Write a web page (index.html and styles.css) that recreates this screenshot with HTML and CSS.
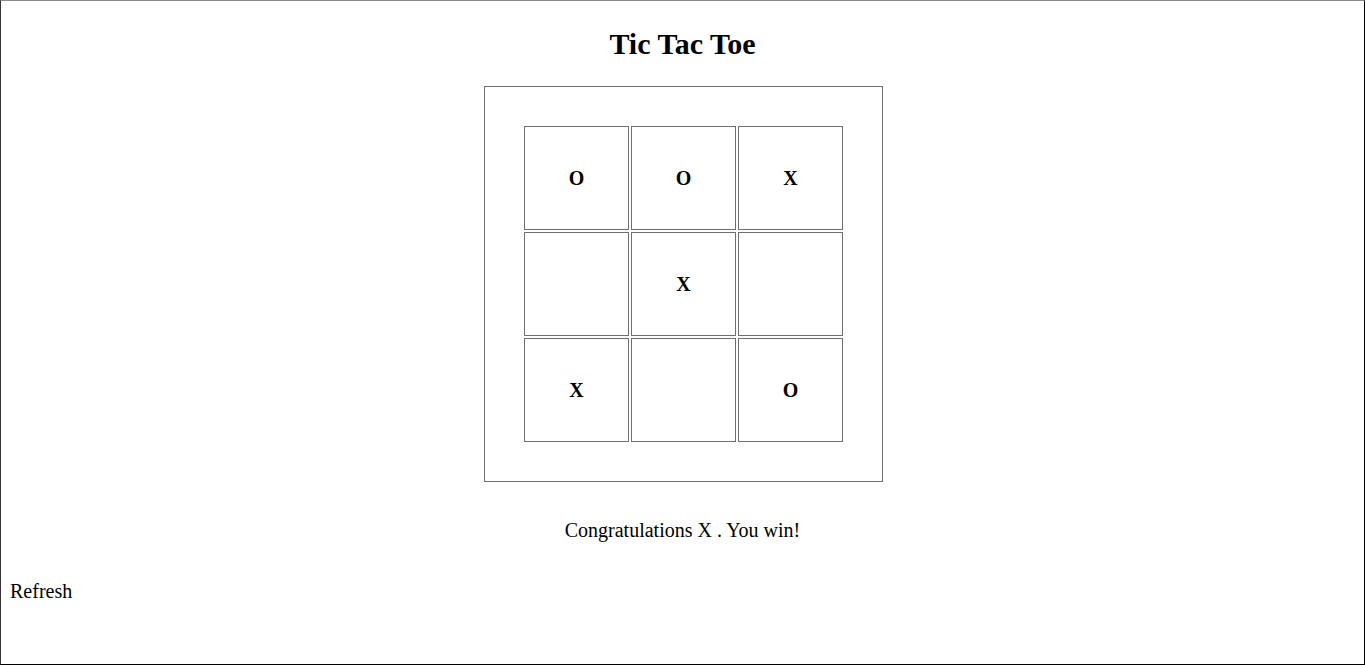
FILE: index.html
```html
<!DOCTYPE html>
<html>
<head>
<meta charset="utf-8">
<title>Tic Tac Toe</title>
<link rel="stylesheet" href="styles.css">
</head>
<body>
<div class="page">
  <h1 class="title">Tic Tac Toe</h1>
  <div class="board">
    <div class="grid">
      <div class="cell">O</div>
      <div class="cell">O</div>
      <div class="cell">X</div>
      <div class="cell"></div>
      <div class="cell">X</div>
      <div class="cell"></div>
      <div class="cell">X</div>
      <div class="cell"></div>
      <div class="cell">O</div>
    </div>
  </div>
  <p class="status">Congratulations X . You win!</p>
  <div class="refresh">Refresh</div>
</div>
</body>
</html>
```
FILE: styles.css
```css
html, body {
  margin: 0;
  padding: 0;
  background: #fff;
}
body {
  font-family: "Liberation Serif", "Times New Roman", serif;
  color: #000;
}
.page {
  box-sizing: border-box;
  width: 1365px;
  height: 665px;
  border: 1px solid #000;
  border-top-color: #8a8a8a;
  border-left-color: #333;
  padding: 0 9px;
  display: flex;
  flex-direction: column;
}
.title {
  margin: 25px 0 0;
  font-size: 30px;
  font-weight: bold;
  text-align: center;
  line-height: 36px;
}
.board {
  align-self: center;
  margin: 24px 0 0 2px;
  box-sizing: border-box;
  width: 399px;
  height: 396px;
  border: 1px solid #6f6f6f;
  padding: 39px 0 0 39px;
}
.grid {
  display: grid;
  grid-template-columns: repeat(3, 105px);
  grid-template-rows: repeat(3, 104px);
  gap: 2px;
}
.cell {
  box-sizing: border-box;
  border: 1px solid #6f6f6f;
  display: flex;
  align-items: center;
  justify-content: center;
  font-size: 20px;
  font-weight: bold;
}
.status {
  margin: 37px 0 0;
  font-size: 20px;
  text-align: center;
  line-height: normal;
}
.refresh {
  margin-top: 38px;
  font-size: 20px;
  line-height: normal;
}
```
